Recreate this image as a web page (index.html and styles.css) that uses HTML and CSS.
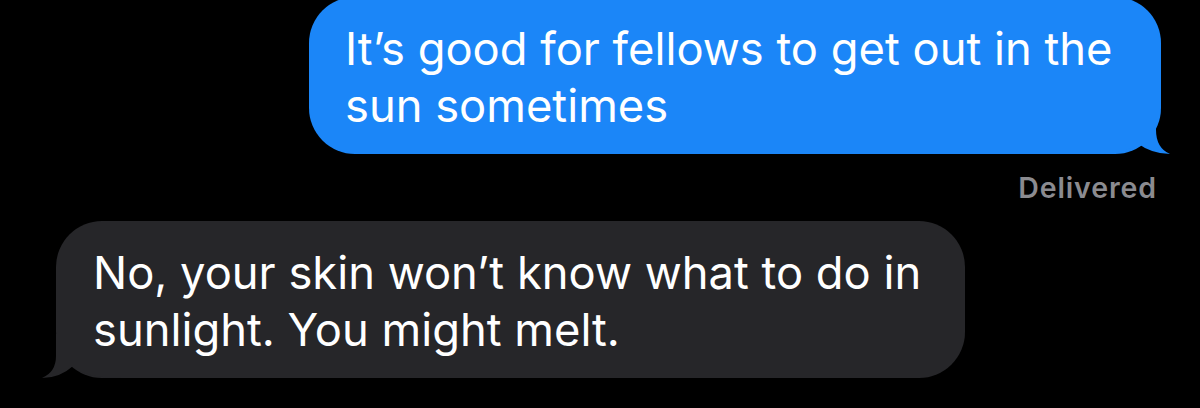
FILE: index.html
```html
<!DOCTYPE html>
<html>
<head>
<meta charset="utf-8">
<link rel="stylesheet" href="styles.css">
</head>
<body>
<div class="thread">
  <div class="row row-out">
    <div class="bubble bubble-out">
      <svg class="tail tail-out" width="80" height="44" viewBox="0 0 80 44"><path d="M61 0 L61 20 Q61 38 75 44 Q57 44 42 33 Q32 44 0 44 L0 0 Z"/></svg>
      <span class="line">It’s good for fellows to get out in the</span>
      <span class="line">sun sometimes</span>
    </div>
  </div>
  <div class="status">Delivered</div>
  <div class="row row-in">
    <div class="bubble bubble-in">
      <svg class="tail tail-in" width="80" height="44" viewBox="0 0 80 44"><path d="M14 0 L14 22 Q14 38 0 44 Q18 44 31 32 Q42 44 80 44 L80 0 Z"/></svg>
      <span class="line">No, your skin won’t know what to do in</span>
      <span class="line">sunlight. You might melt.</span>
    </div>
  </div>
</div>
</body>
</html>
```
FILE: styles.css
```css
html, body {
  margin: 0;
  padding: 0;
  background: #000;
  width: 1200px;
  height: 408px;
  overflow: hidden;
}
.thread {
  display: flex;
  flex-direction: column;
  font-family: "Inter", "Noto Sans", sans-serif;
}
.row {
  display: flex;
}
.row-out {
  justify-content: flex-end;
  padding-right: 39px;
  margin-top: -3px;
}
.row-in {
  justify-content: flex-start;
  padding-left: 56px;
  margin-top: 17px;
}
.bubble {
  position: relative;
  box-sizing: border-box;
  padding: 23px 20px 20px 36px;
  border-radius: 46px;
  font-size: 45.3px;
  line-height: 57px;
  color: #fff;
  display: flex;
  flex-direction: column;
}
.line {
  position: relative;
  z-index: 1;
  white-space: nowrap;
}
.bubble-out {
  width: 852px;
  background: #1b86f8;
}
.bubble-in {
  width: 909px;
  padding-left: 37px;
  background: #262629;
}
.tail {
  position: absolute;
  bottom: 0;
  z-index: 0;
}
.tail-out {
  right: -14px;
  fill: #1b86f8;
}
.tail-in {
  left: -14px;
  fill: #262629;
}
.status {
  align-self: flex-end;
  margin-right: 43px;
  margin-top: 18px;
  font-size: 28.5px;
  line-height: 32px;
  letter-spacing: 0.9px;
  font-weight: 600;
  color: #8b8b90;
}
```
